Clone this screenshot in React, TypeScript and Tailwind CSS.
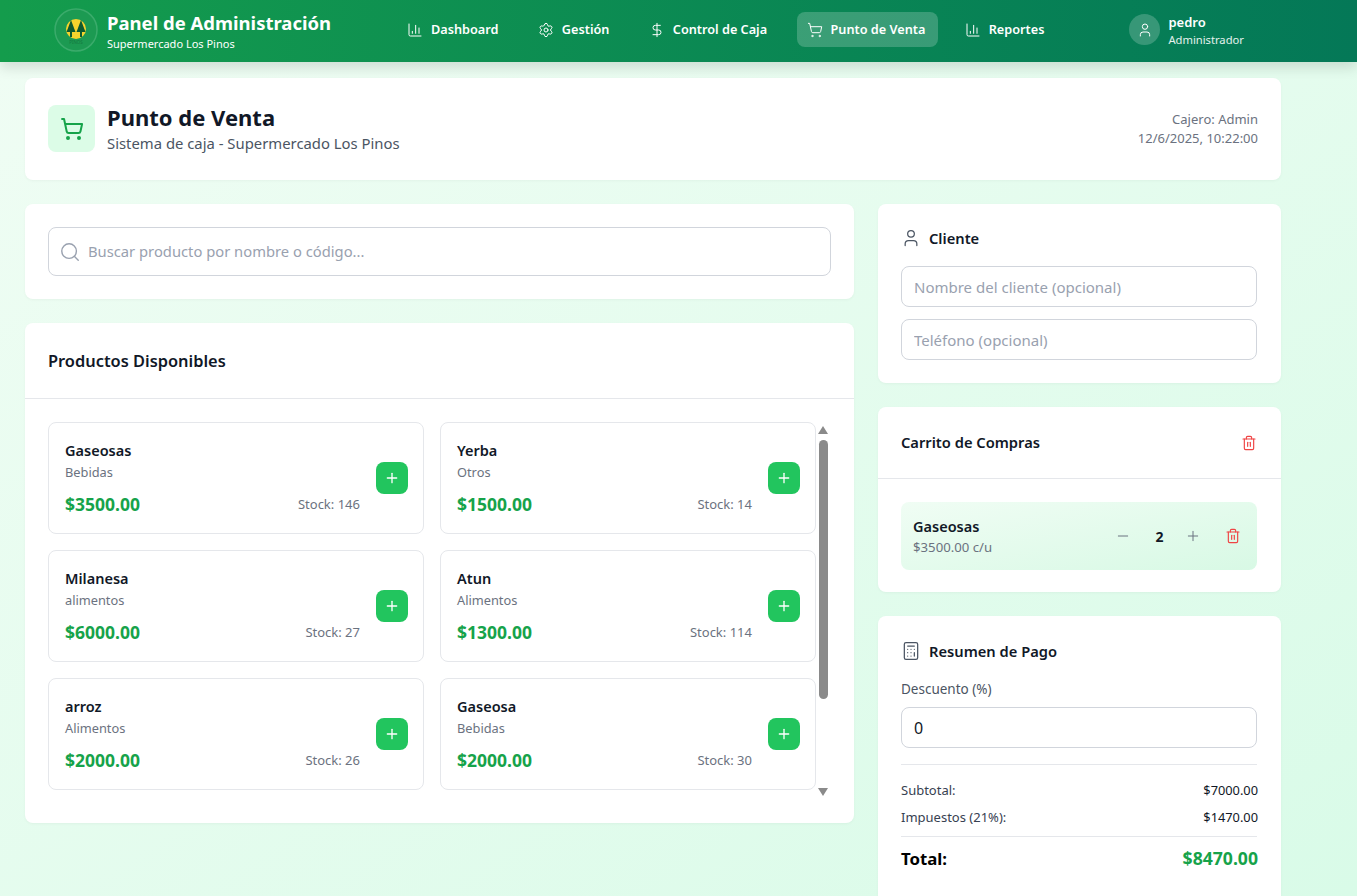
import React from "react";
import { ChartColumn, Settings, DollarSign, ShoppingCart, User, Search, Plus, Minus, Trash2, Calculator } from "lucide-react";

const nav = [
  { label: "Dashboard", icon: ChartColumn, active: false },
  { label: "Gestión", icon: Settings, active: false },
  { label: "Control de Caja", icon: DollarSign, active: false },
  { label: "Punto de Venta", icon: ShoppingCart, active: true },
  { label: "Reportes", icon: ChartColumn, active: false },
];

const products = [
  { n: "Gaseosas", c: "Bebidas", p: "$3500.00", s: "Stock: 146" },
  { n: "Yerba", c: "Otros", p: "$1500.00", s: "Stock: 14" },
  { n: "Milanesa", c: "alimentos", p: "$6000.00", s: "Stock: 27" },
  { n: "Atun", c: "Alimentos", p: "$1300.00", s: "Stock: 114" },
  { n: "arroz", c: "Alimentos", p: "$2000.00", s: "Stock: 26" },
  { n: "Gaseosa", c: "Bebidas", p: "$2000.00", s: "Stock: 30" },
];

function Logo() {
  return (
    <svg width="44" height="44" viewBox="0 0 44 44" className="mb-[2px] shrink-0">
      <circle cx="22" cy="22" r="21" fill="#1c9a52" stroke="#3aab6b" strokeWidth="1.5" />
      <circle cx="22" cy="21" r="10" fill="#f6d32d" />
      <path d="M17 12 L21.5 24 H18 V29 H16 V24 H12.5 Z" fill="#0f5a30" />
      <path d="M27 12 L31.5 24 H28 V29 H26 V24 H22.5 Z" fill="#0f5a30" />
      <text x="22" y="36" textAnchor="middle" fontSize="4.5" fill="#14783f">PINOS</text>
    </svg>
  );
}

function Field({ placeholder }: { placeholder: string }) {
  return (
    <input
      placeholder={placeholder}
      className="h-[41px] w-full rounded-lg border border-gray-300 bg-white px-3 text-[15px] text-gray-900 placeholder:text-gray-400 outline-none"
    />
  );
}

export default function App() {
  return (
    <div className="h-[896px] overflow-hidden bg-gradient-to-br from-[#f0fdf4] to-[#d9fbe8] font-['Noto_Sans','Open_Sans',sans-serif]">
      <header className="flex h-[62px] items-center bg-gradient-to-r from-[#149c4c] to-[#047857] pl-[54px] shadow-[0_6px_12px_rgba(0,0,0,0.12)]">
        <div className="flex w-[330px] items-center gap-[9px]">
          <Logo />
          <div>
            <div className="text-[18.5px] font-bold leading-[24px] text-white">Panel de Administración</div>
            <div className="text-[11px] leading-[17px] text-white">Supermercado Los Pinos</div>
          </div>
        </div>
        <nav className="mb-[3px] ml-[13px] flex items-center gap-[16.4px]">
          {nav.map((item) => {
            const Icon = item.icon;
            return (
              <div
                key={item.label}
                className={`flex h-[35px] items-center gap-2 rounded-lg pl-[10px] pr-[13px] text-[12.7px] font-semibold text-white ${item.active ? "bg-white/20" : ""}`}
              >
                <Icon size={16} strokeWidth={1.5} />
                <span>{item.label}</span>
              </div>
            );
          })}
        </nav>
        <div className="ml-[72px] flex items-center gap-2">
          <div className="mb-[3px] flex h-[31px] w-[31px] items-center justify-center rounded-full bg-white/20 text-white">
            <User size={16} strokeWidth={1.5} />
          </div>
          <div>
            <div className="text-[13px] font-semibold leading-[18px] text-white">pedro</div>
            <div className="text-[11.2px] leading-[18px] text-white/90">Administrador</div>
          </div>
        </div>
      </header>

      <main className="ml-[25px] w-[1256px] pt-4">
        <section className="flex h-[102px] items-center justify-between rounded-lg bg-white pb-px pl-[23px] pr-[23px] shadow-[0_1px_3px_rgba(0,0,0,0.04)]">
          <div className="flex items-center gap-3">
            <div className="flex h-[47px] w-[47px] items-center justify-center rounded-lg bg-[#dcfce7] text-[#16a34a]">
              <ShoppingCart size={24} strokeWidth={2} />
            </div>
            <div>
              <h1 className="text-[22px] font-bold leading-[28px] text-[#111827]">Punto de Venta</h1>
              <p className="mt-px text-[14.85px] leading-[22px] text-[#4b5563]">Sistema de caja - Supermercado Los Pinos</p>
            </div>
          </div>
          <div className="text-right text-[13px] leading-[19px] text-[#6b7280]">
            <div>Cajero: Admin</div>
            <div>12/6/2025, 10:22:00</div>
          </div>
        </section>

        <div className="mt-6 grid grid-cols-[829px_403px] gap-6">
          <div className="flex flex-col gap-6">
            <section className="rounded-lg bg-white p-[23px] shadow-[0_1px_3px_rgba(0,0,0,0.04)]">
              <div className="flex h-[49px] items-center gap-[7px] rounded-lg border border-gray-300 pl-[10px] pr-3 text-gray-400">
                <Search size={22} strokeWidth={1.5} />
                <span className="text-[14.75px]">Buscar producto por nombre o código...</span>
              </div>
            </section>

            <section className="h-[500px] rounded-lg bg-white shadow-[0_1px_3px_rgba(0,0,0,0.04)]">
              <div className="flex h-[76px] items-center border-b border-gray-200 px-[23px] pt-px">
                <h2 className="text-[16.4px] font-semibold text-[#111827]">Productos Disponibles</h2>
              </div>
              <div className="flex items-start pl-[23px] pt-[23px]">
                <div className="grid w-[768px] grid-cols-2 gap-4">
                  {products.map((p) => (
                    <div key={p.n} className="flex h-[112px] items-center gap-4 rounded-lg border border-gray-200 pl-4 pr-[15px]">
                      <div className="min-w-0 flex-1">
                        <div className="mb-[2px] text-[14.5px] font-semibold leading-[20px] text-[#111827]">{p.n}</div>
                        <div className="text-[12.8px] leading-[20px] text-[#6b7280]">{p.c}</div>
                        <div className="mt-[10px] flex items-center justify-between">
                          <span className="text-[17.5px] font-bold leading-[24px] text-[#16a34a]">{p.p}</span>
                          <span className="text-[13px] leading-[24px] text-[#6b7280]">{p.s}</span>
                        </div>
                      </div>
                      <button className="flex h-8 w-8 shrink-0 items-center justify-center rounded-lg bg-[#22c55e] text-white">
                        <Plus size={16} strokeWidth={2} />
                      </button>
                    </div>
                  ))}
                </div>
                <div className="ml-[2px] flex h-[374px] w-[10px] flex-col items-center">
                  <div className="mt-[4px] h-0 w-0 border-x-[5px] border-b-[8px] border-x-transparent border-b-[#8a8a8a]" />
                  <div className="mt-[6px] h-[259px] w-[9px] rounded-full bg-[#8a8a8a]" />
                  <div className="mt-auto h-0 w-0 border-x-[5px] border-t-[8px] border-x-transparent border-t-[#8a8a8a]" />
                </div>
              </div>
            </section>
          </div>

          <div className="flex flex-col gap-6">
            <section className="h-[179px] rounded-lg bg-white pl-[23px] pr-[24px] pt-[23px] shadow-[0_1px_3px_rgba(0,0,0,0.04)]">
              <div className="flex h-[22px] items-center gap-2 text-[#111827]">
                <User size={20} strokeWidth={1.5} className="text-[#4b5563]" />
                <h2 className="text-[14.7px] font-semibold">Cliente</h2>
              </div>
              <div className="mt-[17px] flex flex-col gap-3">
                <Field placeholder="Nombre del cliente (opcional)" />
                <Field placeholder="Teléfono (opcional)" />
              </div>
            </section>

            <section className="h-[185px] rounded-lg bg-white shadow-[0_1px_3px_rgba(0,0,0,0.04)]">
              <div className="flex h-[72px] items-center justify-between border-b border-gray-200 pl-[23px] pr-[24px]">
                <h2 className="text-[14.7px] font-semibold text-[#111827]">Carrito de Compras</h2>
                <Trash2 size={16} strokeWidth={1.75} className="text-[#ef4444]" />
              </div>
              <div className="pl-[23px] pr-[24px] pt-[23px]">
                <div className="flex h-[68px] items-center justify-between rounded-lg bg-gradient-to-br from-[#f0fdf4] to-[#d8f9e5] px-3">
                  <div>
                    <div className="text-[14.5px] font-semibold leading-[22px] text-[#111827]">Gaseosas</div>
                    <div className="text-[13.2px] leading-[21px] text-[#6b7280]">$3500.00 c/u</div>
                  </div>
                  <div className="flex items-center text-[#6b7280]">
                    <Minus size={16} strokeWidth={1.5} />
                    <span className="w-[54px] pl-[3px] text-center text-[14px] font-bold text-[#111827]">2</span>
                    <Plus size={16} strokeWidth={1.5} />
                    <Trash2 size={16} strokeWidth={1.75} className="ml-[24px] mr-[4px] text-[#ef4444]" />
                  </div>
                </div>
              </div>
            </section>

            <section className="rounded-lg bg-white pl-[23px] pr-[24px] pt-[24px] shadow-[0_1px_3px_rgba(0,0,0,0.04)]">
              <div className="flex h-[22px] items-center gap-2 text-[#111827]">
                <Calculator size={20} strokeWidth={1.5} className="text-[#4b5563]" />
                <h2 className="text-[14.7px] font-semibold">Resumen de Pago</h2>
              </div>
              <div className="mt-[17px] text-[13.5px] leading-[20px] text-[#4b5563]">Descuento (%)</div>
              <input
                readOnly
                value="0"
                className="mt-2 h-[41px] w-full rounded-lg border border-gray-300 px-3 text-base text-[#111827] outline-none"
              />
              <div className="mt-4 border-t border-gray-200 pt-[15px] leading-[20px] text-[#111827]">
                <div className="flex justify-between">
                  <span className="text-[13px] text-[#374151]">Subtotal:</span>
                  <span className="mr-[-1px] text-[12.8px]">$7000.00</span>
                </div>
                <div className="mt-[7px] flex justify-between">
                  <span className="text-[13px] text-[#374151]">Impuestos (21%):</span>
                  <span className="mr-[-1px] text-[12.8px]">$1470.00</span>
                </div>
              </div>
              <div className="mt-[9px] flex items-center justify-between border-t border-gray-200 pt-[8px]">
                <span className="text-[16.8px] font-bold text-black">Total:</span>
                <span className="mr-[-1px] text-[17.6px] font-bold text-[#16a34a]">$8470.00</span>
              </div>
              <div className="h-[40px]" />
            </section>
          </div>
        </div>
      </main>
    </div>
  );
}
